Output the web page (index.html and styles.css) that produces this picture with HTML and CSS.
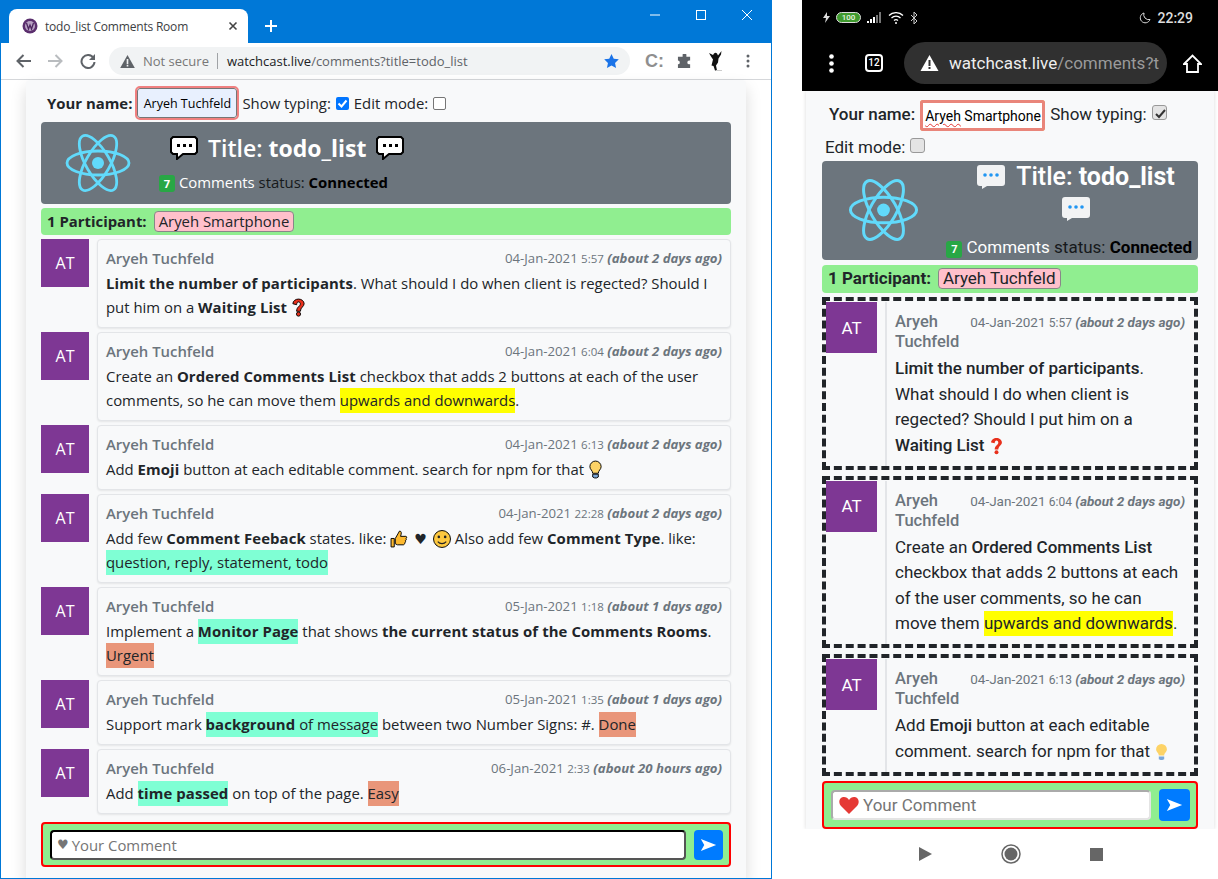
FILE: index.html
```html
<!DOCTYPE html>
<html lang="en">
<head>
    <meta charset="UTF-8">
    <meta name="viewport" content="width=device-width, initial-scale=1.0">
    <title>todo_list Comments Room</title>
    <link rel="stylesheet" href="styles.css">
</head>
<body>
    <svg class="defs" width="0" height="0">
        <defs>
            <symbol id="react" viewBox="0 0 66 60">
                <g fill="none" stroke="#61dafb" stroke-width="2.8">
                    <ellipse cx="33" cy="30" rx="31" ry="12"/>
                    <ellipse cx="33" cy="30" rx="31" ry="12" transform="rotate(60 33 30)"/>
                    <ellipse cx="33" cy="30" rx="31" ry="12" transform="rotate(120 33 30)"/>
                </g>
                <circle cx="33" cy="30" r="6" fill="#61dafb"/>
            </symbol>
            <symbol id="bubble-win" viewBox="0 0 28 24">
                <path d="M3 1h22l2 2v13l-2 2H13l-6 5v-5H3l-2-2V3z" fill="#fff" stroke="#000" stroke-width="2"/>
                <path d="M7 8h3v3H7zM13 8h3v3h-3zM19 8h3v3h-3z" fill="#000"/>
            </symbol>
            <symbol id="bubble-phone" viewBox="0 0 28 24">
                <path d="M3 0h22a3 3 0 0 1 3 3v15a3 3 0 0 1-3 3H10l-5 3v-3H3a3 3 0 0 1-3-3V3a3 3 0 0 1 3-3z" fill="#f2f3f4"/>
                <circle cx="8" cy="10" r="1.8" fill="#2196f3"/>
                <circle cx="14" cy="10" r="1.8" fill="#2196f3"/>
                <circle cx="20" cy="10" r="1.8" fill="#2196f3"/>
            </symbol>
            <symbol id="send" viewBox="0 0 20 16">
                <path d="M1 1l18 7-18 7 4-7z" fill="#fff"/>
            </symbol>
            <symbol id="warn" viewBox="0 0 18 16">
                <path d="M9 0l9 16H0z" fill="currentColor"/>
                <path d="M8 5h2v6H8zM8 12h2v2H8z" fill="var(--warn-mark, #fff)"/>
            </symbol>
            <symbol id="question" viewBox="0 0 16 20">
                <path class="emoji-line" d="M2 6c0-3 3-5 6-5s6 2 6 5-4 4-4 8H6c0-5 4-5 4-8 0-1-1-2-2-2S6 5 6 7z" fill="#e8301c"/>
                <circle class="emoji-line" cx="8" cy="17" r="2.2" fill="#e8301c"/>
            </symbol>
            <symbol id="bulb" viewBox="0 0 16 20">
                <path class="emoji-line" d="M8 1a6 6 0 0 0-6 6c0 3 3 4 3 7h6c0-3 3-4 3-7a6 6 0 0 0-6-6z" fill="#fdd366"/>
                <path class="emoji-line" d="M5 15h6v3l-2 1H7l-2-1z" fill="#7ba7d8"/>
            </symbol>
        </defs>
    </svg>

    <section class="browser">
        <div class="tabstrip">
            <div class="tab">
                <svg class="favicon" width="16" height="16" viewBox="0 0 16 16"><circle cx="8" cy="8" r="7.5" fill="#5b2f6e"/><circle cx="8" cy="8" r="5" fill="#b9a3c4"/><path d="M4.500 5l2 6 1.500-4 1.500 4 2-6" fill="none" stroke="#4d2560" stroke-width="1.300"/></svg>
                <span class="tab-title">todo_list Comments Room</span>
                <svg class="tab-close" width="10" height="10" viewBox="0 0 10 10"><path d="M1.500 1.500l7 7M8.500 1.500l-7 7" stroke="#444" stroke-width="1.600"/></svg>
            </div>
            <svg class="new-tab" width="12" height="12" viewBox="0 0 12 12"><path d="M6 0v12M0 6h12" stroke="#fff" stroke-width="2"/></svg>
            <div class="win-controls">
                <svg width="12" height="12" viewBox="0 0 12 12"><path d="M1 6h10" stroke="#fff"/></svg>
                <svg width="12" height="12" viewBox="0 0 12 12"><rect x="1.500" y="1.500" width="9" height="9" fill="none" stroke="#fff"/></svg>
                <svg width="12" height="12" viewBox="0 0 12 12"><path d="M1 1l10 10M11 1L1 11" stroke="#fff"/></svg>
            </div>
        </div>
        <div class="toolbar">
            <svg class="tool" width="15" height="14" viewBox="0 0 15 14"><path d="M15 7H2M7.500 1L1.500 7l6 6" fill="none" stroke="#5f6368" stroke-width="2"/></svg>
            <svg class="tool tool-gap" width="15" height="14" viewBox="0 0 15 14"><path d="M0 7h13M7.500 1l6 6-6 6" fill="none" stroke="#b9bcbf" stroke-width="2"/></svg>
            <svg class="tool tool-gap" width="16" height="16" viewBox="0 0 16 16"><path d="M13.500 5A6.500 6.500 0 1 0 14.500 9" fill="none" stroke="#5f6368" stroke-width="2"/><path d="M15 1v6H9z" fill="#5f6368"/></svg>
            <div class="omnibox">
                <svg class="omni-warn" width="15" height="13"><use href="#warn"/></svg>
                <span class="omni-label">Not secure</span>
                <span class="omni-sep"></span>
                <span class="omni-url"><b>watchcast.live</b>/comments?title=todo_list</span>
                <svg class="omni-star" width="15" height="14" viewBox="0 0 24 23"><path d="M12 0l3.700 7.800 8.300 1-6.200 5.800 1.700 8.400-7.500-4.300L4.500 23l1.700-8.400L0 8.800l8.300-1z" fill="#1a73e8"/></svg>
            </div>
            <div class="extensions">
                <span class="ext-letter">C:</span>
                <svg width="15" height="15" viewBox="0 0 16 16"><path d="M6 1a2 2 0 0 1 4 0v2h4v4h-1a2 2 0 0 0 0 4h1v4H1v-4a2 2 0 0 0 0-4V3h5z" fill="#5f6368"/></svg>
                <svg width="15" height="20" viewBox="0 0 15 20"><path d="M1 2l4 2 1-1.500a2 2 0 0 1 3 0l1 2L13.500 0 13 3.500l-2.500 4-.5 4-2 3 1 5H7l-1.500-4.500-2-.5L5 8.500l-2-3z" fill="#111"/><path d="M8 19.500h6" stroke="#ccc"/></svg>
                <svg class="ext-menu" width="4" height="14" viewBox="0 0 4 14"><circle cx="2" cy="2" r="1.500" fill="#5f6368"/><circle cx="2" cy="7" r="1.500" fill="#5f6368"/><circle cx="2" cy="12" r="1.500" fill="#5f6368"/></svg>
            </div>
        </div>
        <div class="page">
            <div class="room">
                <div class="name-row">
                    <b>Your name:</b>
                    <span class="name-input">Aryeh Tuchfeld</span>
                    <span>Show typing:</span>
                    <span class="check check-on"><svg width="13" height="13" viewBox="0 0 13 13"><path d="M2.500 6.500l3 3 5-6" fill="none" stroke="#fff" stroke-width="2"/></svg></span>
                    <span>Edit mode:</span>
                    <span class="check"></span>
                </div>
                <header class="room-head">
                    <svg class="logo" width="66" height="60"><use href="#react"/></svg>
                    <div class="room-info">
                        <h1 class="room-title">
                            <svg width="28" height="24"><use href="#bubble-win"/></svg>
                            <span>Title: <b>todo_list</b></span>
                            <svg width="28" height="24"><use href="#bubble-win"/></svg>
                        </h1>
                        <div class="room-status">
                            <span class="badge">7</span> <span class="status-word">Comments</span> status: <b>Connected</b>
                        </div>
                    </div>
                </header>
                <div class="participants"><b>1 Participant:</b> <span class="pill">Aryeh Smartphone</span></div>

                <article class="comment">
                    <div class="avatar">AT</div>
                    <div class="bubble">
                        <div class="bubble-head"><span class="author">Aryeh Tuchfeld</span><span class="stamp">04-Jan-2021 <small>5:57</small> <i>(about 2 days ago)</i></span></div>
                        <div class="bubble-text"><b>Limit the number of participants</b>. What should I do when client is regected? Should I put him on a <b>Waiting List</b> <svg class="emoji" width="15" height="19"><use href="#question"/></svg></div>
                    </div>
                </article>
                <article class="comment">
                    <div class="avatar">AT</div>
                    <div class="bubble">
                        <div class="bubble-head"><span class="author">Aryeh Tuchfeld</span><span class="stamp">04-Jan-2021 <small>6:04</small> <i>(about 2 days ago)</i></span></div>
                        <div class="bubble-text">Create an <b>Ordered Comments List</b> checkbox that adds 2 buttons at each of the user comments, so he can move them <mark class="hl-yellow">upwards and downwards</mark>.</div>
                    </div>
                </article>
                <article class="comment">
                    <div class="avatar">AT</div>
                    <div class="bubble">
                        <div class="bubble-head"><span class="author">Aryeh Tuchfeld</span><span class="stamp">04-Jan-2021 <small>6:13</small> <i>(about 2 days ago)</i></span></div>
                        <div class="bubble-text">Add <b>Emoji</b> button at each editable comment. search for npm for that <svg class="emoji" width="15" height="19"><use href="#bulb"/></svg></div>
                    </div>
                </article>
                <article class="comment">
                    <div class="avatar">AT</div>
                    <div class="bubble">
                        <div class="bubble-head"><span class="author">Aryeh Tuchfeld</span><span class="stamp">04-Jan-2021 <small>22:28</small> <i>(about 2 days ago)</i></span></div>
                        <div class="bubble-text">Add few <b>Comment Feeback</b> states. like: <svg class="emoji" width="18" height="18" viewBox="0 0 17 17"><path d="M1 8h3v8H1zM5 8l4-7c2 0 2 2 1 5h5c1 0 1 2 0 2 1 1 0 2-.500 2 .500 1 0 2-.500 2 0 1-.500 2-1.500 2H7l-2-1z" fill="#fdb92f" stroke="#000" stroke-width=".9"/></svg><span class="black-heart">&#9829;</span><svg class="emoji" width="18" height="18" viewBox="0 0 17 17"><circle cx="8.500" cy="8.500" r="8" fill="#fdc83f" stroke="#000" stroke-width=".9"/><circle cx="5.500" cy="6.500" r="1.200" fill="#222"/><circle cx="11.500" cy="6.500" r="1.200" fill="#222"/><path d="M4.500 11c2 2.500 6 2.500 8 0" fill="none" stroke="#222"/></svg> Also add few <b>Comment Type</b>. like: <mark class="hl-aqua">question, reply, statement, todo</mark></div>
                    </div>
                </article>
                <article class="comment">
                    <div class="avatar">AT</div>
                    <div class="bubble">
                        <div class="bubble-head"><span class="author">Aryeh Tuchfeld</span><span class="stamp">05-Jan-2021 <small>1:18</small> <i>(about 1 days ago)</i></span></div>
                        <div class="bubble-text">Implement a <mark class="hl-aqua"><b>Monitor Page</b></mark> that shows <b>the current status of the Comments Rooms</b>. <mark class="hl-salmon">Urgent</mark></div>
                    </div>
                </article>
                <article class="comment">
                    <div class="avatar">AT</div>
                    <div class="bubble">
                        <div class="bubble-head"><span class="author">Aryeh Tuchfeld</span><span class="stamp">05-Jan-2021 <small>1:35</small> <i>(about 1 days ago)</i></span></div>
                        <div class="bubble-text">Support mark <mark class="hl-aqua"><b>background</b> of message</mark> between two Number Signs: #. <mark class="hl-salmon">Done</mark></div>
                    </div>
                </article>
                <article class="comment">
                    <div class="avatar">AT</div>
                    <div class="bubble">
                        <div class="bubble-head"><span class="author">Aryeh Tuchfeld</span><span class="stamp">06-Jan-2021 <small>2:33</small> <i>(about 20 hours ago)</i></span></div>
                        <div class="bubble-text">Add <mark class="hl-aqua"><b>time passed</b></mark> on top of the page. <mark class="hl-salmon">Easy</mark></div>
                    </div>
                </article>

                <div class="composer">
                    <div class="composer-input"><span class="heart">&#9829;</span> Your Comment</div>
                    <div class="composer-send"><svg width="17" height="14"><use href="#send"/></svg></div>
                </div>
            </div>
        </div>
    </section>

    <section class="phone">
        <div class="status-bar">
            <div class="status-icons">
                <svg width="7" height="11" viewBox="0 0 7 11"><path d="M4 0L0 6h3l-1 5 5-7H4z" fill="#ddd"/></svg>
                <span class="battery">100</span>
                <svg width="15" height="11" viewBox="0 0 15 11"><path d="M0 9h2v2H0zM3 7h2v4H3zM6 5h2v6H6z" fill="#fff"/><path d="M9 3h2v8H9zM12 0h2v11h-2z" fill="#777"/></svg>
                <svg width="16" height="12" viewBox="0 0 16 12"><path d="M1 3.500a10 10 0 0 1 14 0M3.500 6a6.500 6.500 0 0 1 9 0M6 8.500a3 3 0 0 1 4 0" fill="none" stroke="#fff" stroke-width="1.300"/><circle cx="8" cy="11" r="1" fill="#fff"/></svg>
                <svg width="8" height="14" viewBox="0 0 8 14"><path d="M1 4l6 6-3 3V1l3 3-6 6" fill="none" stroke="#ccc"/></svg>
            </div>
            <div class="status-clock">
                <svg width="12" height="12" viewBox="0 0 12 12"><path d="M5 1a5 5 0 1 0 6 6.500A5 5 0 0 1 5 1z" fill="none" stroke="#ddd"/></svg>
                <span>22:29</span>
            </div>
        </div>
        <div class="phone-urlbar">
            <svg width="5" height="19" viewBox="0 0 5 19"><circle cx="2.500" cy="2.500" r="2.300" fill="#fff"/><circle cx="2.500" cy="9.500" r="2.300" fill="#fff"/><circle cx="2.500" cy="16.500" r="2.300" fill="#fff"/></svg>
            <span class="tab-count">12</span>
            <div class="phone-omnibox">
                <svg class="phone-warn" width="19" height="16"><use href="#warn"/></svg>
                <span class="phone-url"><span>watchcast.live</span>/comments?t</span>
            </div>
            <svg width="19" height="19" viewBox="0 0 19 19"><path d="M1 10l8.500-8.500L18 10h-3v8H4v-8z" fill="none" stroke="#fff" stroke-width="1.800"/></svg>
        </div>
        <div class="phone-page">
            <div class="phone-room">
                <div class="name-row">
                    <b>Your name:</b>
                    <span class="name-input"><span class="spell">Aryeh</span>&nbsp;Smartphone<span class="caret"></span></span>
                    <span>Show typing:</span>
                    <span class="check check-grey"><svg width="15" height="15" viewBox="0 0 15 15"><path d="M3 8l3 3 6-7" fill="none" stroke="#333" stroke-width="2"/></svg></span>
                    <span class="edit-mode">Edit mode:</span>
                    <span class="check check-grey"></span>
                </div>
                <header class="room-head">
                    <svg class="logo" width="71" height="64"><use href="#react"/></svg>
                    <div class="room-info">
                        <h1 class="room-title">
                            <svg width="28" height="24"><use href="#bubble-phone"/></svg>
                            <span>Title: <b>todo_list</b></span>
                            <svg width="28" height="24"><use href="#bubble-phone"/></svg>
                        </h1>
                        <div class="room-status">
                            <span class="badge">7</span> <span class="status-word">Comments</span> status: <b>Connected</b>
                        </div>
                    </div>
                </header>
                <div class="participants"><b>1 Participant:</b> <span class="pill">Aryeh Tuchfeld</span></div>

                <article class="comment">
                    <div class="avatar">AT</div>
                    <div class="bubble">
                        <div class="bubble-head"><span class="author">Aryeh Tuchfeld</span><span class="stamp">04-Jan-2021 <small>5:57</small> <i>(about 2 days ago)</i></span></div>
                        <div class="bubble-text"><b>Limit the number of participants</b>. What should I do when client is regected? Should I put him on a <b>Waiting List</b> <svg class="emoji" width="15" height="18"><use href="#question"/></svg></div>
                    </div>
                </article>
                <article class="comment">
                    <div class="avatar">AT</div>
                    <div class="bubble">
                        <div class="bubble-head"><span class="author">Aryeh Tuchfeld</span><span class="stamp">04-Jan-2021 <small>6:04</small> <i>(about 2 days ago)</i></span></div>
                        <div class="bubble-text">Create an <b>Ordered Comments List</b> checkbox that adds 2 buttons at each of the user comments, so he can move them <mark class="hl-yellow">upwards and downwards</mark>.</div>
                    </div>
                </article>
                <article class="comment">
                    <div class="avatar">AT</div>
                    <div class="bubble">
                        <div class="bubble-head"><span class="author">Aryeh Tuchfeld</span><span class="stamp">04-Jan-2021 <small>6:13</small> <i>(about 2 days ago)</i></span></div>
                        <div class="bubble-text">Add <b>Emoji</b> button at each editable comment. search for npm for that <svg class="emoji" width="15" height="18"><use href="#bulb"/></svg></div>
                    </div>
                </article>

                <div class="composer">
                    <div class="composer-input"><svg class="heart-red" width="20" height="18" viewBox="0 0 20 18"><path d="M10 18L2 10C-1 7 0 1 5 1c2 0 4 1 5 3 1-2 3-3 5-3 5 0 6 6 3 9z" fill="#e53935"/></svg> Your Comment</div>
                    <div class="composer-send"><svg width="17" height="14"><use href="#send"/></svg></div>
                </div>
            </div>
        </div>
        <div class="phone-nav">
            <svg width="13" height="14" viewBox="0 0 13 14"><path d="M0 0l13 7-13 7z" fill="#666"/></svg>
            <svg width="20" height="20" viewBox="0 0 20 20"><circle cx="10" cy="10" r="9" fill="none" stroke="#666" stroke-width="1.500"/><circle cx="10" cy="10" r="6.500" fill="#666"/></svg>
            <svg width="13" height="13" viewBox="0 0 13 13"><rect width="13" height="13" fill="#666"/></svg>
        </div>
    </section>
</body>
</html>
```

FILE: styles.css
```css
* {
    box-sizing: border-box;
}
html, body {
    height: 100%;
}
body {
    margin: 0;
    height: 879px;
    overflow: hidden;
    display: flex;
    justify-content: space-between;
    background: white;
    font-family: "Open Sans", "Noto Sans", sans-serif;
    font-size: 14.9px;
    color: #212529;
}
.defs {
    position: absolute;
}
svg {
    flex: none;
}
.emoji-line {
    stroke: var(--emoji-line, #000);
    stroke-width: 1;
}

/* desktop chrome */
.browser {
    width: 772px;
    height: 879px;
    display: flex;
    flex-direction: column;
    border: 1px solid #0078d7;
    border-top: 0;
    overflow: hidden;
}
.tabstrip {
    height: 43px;
    flex: none;
    display: flex;
    align-items: flex-end;
    padding-left: 8px;
    background: #0078d7;
}
.tab {
    width: 239px;
    height: 34px;
    display: flex;
    align-items: center;
    padding: 0 10px 0 13px;
    background: white;
    border-radius: 8px 8px 0 0;
    font-size: 12px;
    letter-spacing: -0.2px;
    color: #3c4043;
}
.tab-title {
    margin-left: 7px;
    flex: 1;
}
.new-tab {
    margin: 0 0 11px 17px;
}
.win-controls {
    margin-left: auto;
    align-self: flex-start;
    display: flex;
    gap: 34px;
    padding: 9px 18px 0 0;
}
.toolbar {
    height: 37px;
    flex: none;
    display: flex;
    align-items: center;
    padding-left: 15px;
    background: white;
    border-bottom: 1px solid #d5d7da;
}
.tool-gap {
    margin-left: 17px;
}
.omnibox {
    width: 521px;
    height: 28px;
    margin-left: 13px;
    display: flex;
    align-items: center;
    padding: 0 11px;
    background: #f1f3f4;
    border-radius: 14px;
    font-size: 13px;
    color: #5f6368;
}
.omni-warn {
    color: #5f6368;
    --warn-mark: #f1f3f4;
}
.omni-label {
    margin-left: 8px;
    color: #777;
}
.omni-sep {
    width: 1px;
    height: 16px;
    margin: 0 9px 0 8px;
    background: #a0a3a6;
}
.omni-url b {
    font-weight: normal;
    color: #202124;
}
.omni-star {
    margin-left: auto;
}
.extensions {
    flex: 1;
    display: flex;
    align-items: center;
    gap: 16px;
    padding-left: 15px;
}
.ext-letter {
    width: 16px;
    font-family: "Liberation Sans", sans-serif;
    font-size: 18px;
    font-weight: 700;
    color: #8f8f8f;
}
.ext-menu {
    margin-left: 7px;
}

/* room page */
.page {
    flex: 1;
    min-height: 0;
    padding: 0 25px 0 25px;
    background: white;
}
.room {
    height: 100%;
    padding: 8px 15px 0;
    background: #f8f9fa;
    border-radius: 4px 4px 0 0;
    box-shadow: 0 8px 16px rgba(0, 0, 0, 0.15);
}
.name-row {
    display: flex;
    align-items: center;
    gap: 5px;
    height: 30px;
    padding-left: 6px;
}
.name-input {
    width: 100px;
    height: 30px;
    display: flex;
    align-items: center;
    justify-content: center;
    background: #e8f0fe;
    border: 1px solid #767676;
    outline: 2px solid #f08080;
    outline-offset: 0;
    border-radius: 3px;
    font-size: 12.500px;
    color: #000;
}
.check {
    width: 13px;
    height: 13px;
    display: block;
    background: white;
    border: 1px solid #767676;
    border-radius: 2px;
}
.check-on {
    background: #0075ff;
    border: 0;
}
.check svg {
    display: block;
}
.room-head {
    height: 82px;
    margin-top: 4px;
    display: flex;
    padding: 11px 0 0 24px;
    background: #6c757d;
    border-radius: 4px;
}
.room-info {
    padding-left: 28px;
}
.room-title {
    margin: 3px 0 0 11px;
    display: flex;
    align-items: center;
    gap: 10px;
    font-size: 23px;
    line-height: 24px;
    font-weight: 600;
    color: white;
}
.room-title b {
    font-weight: 700;
}
.room-status {
    margin-top: 12px;
    line-height: 20px;
    color: #16191b;
}
.room-status b {
    color: #000;
}
.status-word {
    color: white;
}
.badge {
    display: inline-block;
    width: 16px;
    height: 17px;
    background: #28a745;
    border-radius: 3px;
    color: white;
    font-size: 11px;
    font-weight: 700;
    line-height: 17px;
    text-align: center;
}
.participants {
    height: 27px;
    margin-top: 4px;
    padding-left: 6px;
    display: flex;
    align-items: center;
    gap: 7px;
    background: #90ee90;
    border-radius: 4px;
}
.participants b {
    margin-top: -2px;
}
.pill {
    padding: 0 4px;
    height: 21px;
    line-height: 18px;
    background: #ffc0cb;
    border: 1px solid #888;
    border-radius: 4px;
}
.comment {
    margin-top: 4px;
    display: flex;
    align-items: flex-start;
    gap: 8px;
}
.avatar {
    width: 48px;
    height: 48px;
    flex: none;
    display: flex;
    align-items: center;
    justify-content: center;
    background: #7e3794;
    color: white;
    font-size: 16px;
}
.bubble {
    flex: 1;
    min-width: 0;
    padding: 6px 8px 8px;
    background: #f8f9fa;
    border: 1px solid #e3e5e8;
    border-radius: 4px;
    box-shadow: 0 1px 2px rgba(0, 0, 0, 0.08);
}
.bubble-head {
    height: 24px;
    display: flex;
    justify-content: space-between;
    margin-bottom: 1px;
    line-height: 24px;
    color: #6c757d;
}
.author {
    font-weight: 600;
}
.stamp {
    font-size: 13.200px;
    white-space: nowrap;
}
.stamp small {
    font-size: 11.500px;
}
.stamp i {
    font-weight: 700;
}
.bubble-text {
    line-height: 24px;
}
.bubble-text b {
    letter-spacing: 0.1px;
}
.bubble-text b, .participants b, .name-row b, .room-status b {
    font-weight: 700;
}
.emoji {
    margin: -4px 0;
}
.black-heart {
    margin: 0 6px;
    font-family: "DejaVu Sans", sans-serif;
    font-size: 14px;
    line-height: 1;
}
mark {
    color: inherit;
    padding: 2px 0 3px;
}
.hl-yellow {
    background: yellow;
}
.hl-aqua {
    background: #7fffd4;
}
.hl-salmon {
    background: #e9967a;
}
.composer {
    height: 45px;
    margin-top: 8px;
    display: flex;
    align-items: center;
    gap: 8px;
    padding: 0 6px 0 7px;
    background: #90ee90;
    border: 2px solid red;
    border-radius: 4px;
}
.composer-input {
    flex: 1;
    height: 30px;
    display: flex;
    align-items: center;
    gap: 3px;
    padding-left: 5px;
    background: white;
    border: 2px inset #555;
    border-radius: 4px;
    color: #757575;
}
.heart {
    font-family: "DejaVu Sans", sans-serif;
    font-size: 13px;
}
.composer-send {
    width: 29px;
    height: 30px;
    display: flex;
    align-items: center;
    justify-content: center;
    background: #007bff;
    border-radius: 4px;
}

/* phone */
.phone {
    --emoji-line: transparent;
    width: 416px;
    height: 879px;
    display: flex;
    flex-direction: column;
    font-family: Roboto, sans-serif;
    font-size: 17px;
}
.status-bar {
    height: 35px;
    flex: none;
    display: flex;
    align-items: center;
    justify-content: space-between;
    padding: 0 25px 0 21px;
    background: black;
    color: #ddd;
    font-size: 14px;
    font-weight: 500;
}
.status-icons, .status-clock {
    display: flex;
    align-items: center;
    gap: 6px;
}
.battery {
    width: 25px;
    height: 11px;
    background: #3f9a2e;
    border: 1px solid #ddd;
    border-radius: 6px;
    color: #e8f5e0;
    font-size: 8px;
    line-height: 9px;
    text-align: center;
}
.phone-urlbar {
    height: 56px;
    flex: none;
    display: flex;
    align-items: center;
    padding: 0 16px 0 27px;
    background: black;
}
.tab-count {
    width: 18px;
    height: 18px;
    margin-left: 31px;
    border: 2px solid white;
    border-radius: 4px;
    color: white;
    font-size: 10px;
    font-weight: 500;
    line-height: 14px;
    text-align: center;
}
.phone-omnibox {
    width: 263px;
    height: 42px;
    margin: 0 16px 0 21px;
    display: flex;
    align-items: center;
    gap: 10px;
    padding-left: 16px;
    background: #303030;
    border-radius: 21px;
    overflow: hidden;
    color: #9a9a9a;
    font-size: 17px;
    white-space: nowrap;
}
.phone-warn {
    color: white;
    --warn-mark: #303030;
}
.phone-url span {
    color: #eee;
}
.phone-page {
    flex: 1;
    min-height: 0;
    padding: 0 4px;
    overflow: hidden;
}
.phone-room {
    height: 100%;
    padding: 9px 16px 0;
    background: #f8f9fa;
    box-shadow: 0 0 4px rgba(0, 0, 0, 0.15);
}
.phone .name-row {
    height: auto;
    flex-wrap: wrap;
    align-items: flex-start;
    gap: 0 5px;
    padding-left: 7px;
    line-height: 28px;
}
.phone .name-row b {
    font-weight: 500;
}
.phone .name-input {
    width: 125px;
    height: 31px;
    justify-content: flex-start;
    padding-left: 4px;
    background: white;
    border: 1px solid #f0a030;
    outline: 3px solid #e9857a;
    outline-offset: -3px;
    font-size: 14px;
    border-radius: 3px;
}
.spell {
    text-decoration: underline wavy #e53935 1px;
    text-underline-offset: 2px;
}
.caret {
    width: 1px;
    height: 19px;
    margin-left: 1px;
    background: #000;
}
.check-grey {
    width: 15px;
    height: 15px;
    margin-top: 5px;
    background: #e4e4e4;
    border-color: #999;
    border-radius: 3px;
}
.edit-mode {
    margin: 2px 0 0 -4px;
}
.edit-mode + .check-grey {
    margin-top: 7px;
}
.phone .room-head {
    height: 99px;
    margin-top: 0;
    padding: 17px 0 0 26px;
}
.phone .room-info {
    flex: 1;
    min-width: 0;
    padding: 0 6px 0 26px;
    margin-top: -13px;
}
.phone .room-title {
    width: 220px;
    margin: 0 0 0 21px;
    flex-wrap: wrap;
    justify-content: center;
    gap: 8px 11px;
    font-size: 25px;
    font-weight: 500;
}
.phone .room-status {
    margin-top: 16px;
    text-align: right;
    font-size: 17px;
    white-space: nowrap;
}
.phone .participants {
    height: 28px;
    margin-top: 5px;
    padding-bottom: 2px;
}
.phone .participants b {
    margin-top: 0;
}
.phone .comment {
    gap: 8px;
    padding: 1px 0 0 0;
    margin-top: 6px;
    border: 4px dashed #212529;
}
.phone .participants + .comment {
    margin-top: 4px;
}
.phone .avatar {
    width: 51px;
    height: 51px;
    font-size: 17px;
}
.phone .bubble {
    padding: 10px 9px 7.500px 8px;
    border-width: 0 0 0 2px;
    border-radius: 0;
    box-shadow: none;
}
.phone .bubble-head {
    height: auto;
    margin-bottom: 0;
    line-height: 20px;
    gap: 8px;
    font-size: 16.500px;
}
.phone .author {
    font-weight: 500;
}
.phone .stamp {
    font-size: 13.500px;
}
.phone .stamp small {
    font-size: 12px;
}
.phone .bubble-text {
    margin-top: 4px;
    line-height: 25.500px;
}
.phone .bubble-text b {
    font-weight: 500;
    letter-spacing: 0;
}
.phone .composer {
    height: 48px;
    margin-top: 5px;
}
.phone .composer-input {
    height: 30px;
    gap: 4px;
    padding-left: 6px;
    border: 2px solid #e4e4e4;
    border-top-color: #aaa;
    border-left-color: #aaa;
    font-size: 17px;
}
.phone .composer-send {
    width: 31px;
    height: 32px;
}
.phone-nav {
    height: 50px;
    flex: none;
    display: flex;
    align-items: center;
    padding-left: 117px;
    gap: 69px;
    background: white;
}
```
